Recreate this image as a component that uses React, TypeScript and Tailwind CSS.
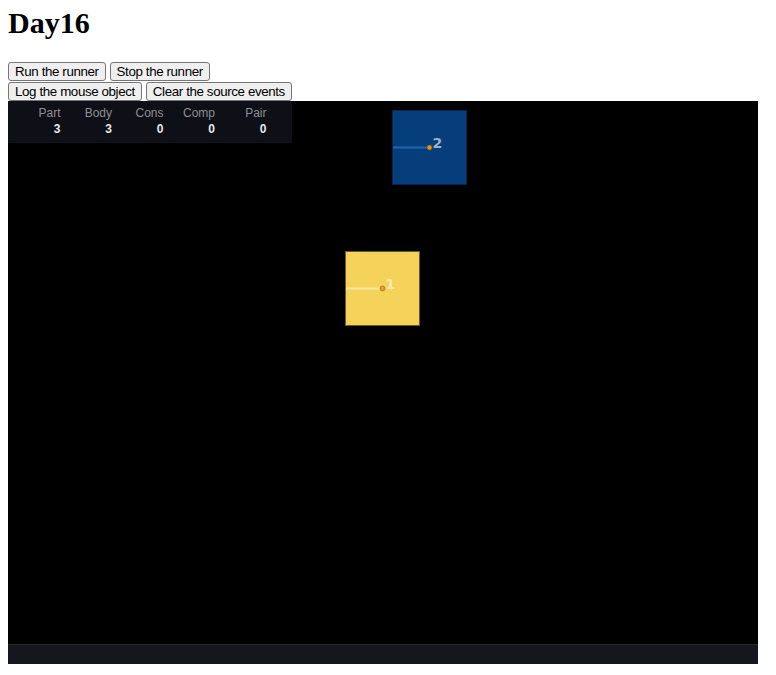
import React from 'react';

const stats = [
  { label: 'Part', value: 3 },
  { label: 'Body', value: 3 },
  { label: 'Cons', value: 0 },
  { label: 'Comp', value: 0 },
  { label: 'Pair', value: 0 },
];

function Btn({ children }: { children: React.ReactNode }) {
  return (
    <button className="h-[19px] px-[6px] bg-[#efefef] border border-[#767676] rounded-[3px] text-[13.33px] leading-[15px] tracking-[-0.38px] text-black font-['Liberation_Sans',Arial,sans-serif]">
      {children}
    </button>
  );
}

function Scene() {
  return (
    <svg width="750" height="543" className="block">
      {/* body 2 */}
      <rect x="384.5" y="9.5" width="74" height="74" fill="#063e7b" stroke="#04264a" strokeWidth="1" />
      <line x1="385" y1="46.5" x2="421.5" y2="46.5" stroke="#1f62b4" strokeWidth="2" />
      <circle cx="421.5" cy="46.5" r="2.5" fill="#e09a1c" stroke="#7a5410" strokeWidth="0.8" />
      <text x="424.5" y="46.5" fill="#9fb0c8" fontSize="14" fontWeight="bold" fontFamily="'DejaVu Sans', sans-serif">2</text>
      {/* body 1 */}
      <rect x="337.5" y="150.5" width="74" height="74" fill="#f5d35b" stroke="#6b5a24" strokeWidth="1" />
      <line x1="338" y1="187.5" x2="374.5" y2="187.5" stroke="#f9e7a2" strokeWidth="2" />
      <circle cx="374.5" cy="187.5" r="2.5" fill="#e0a12c" stroke="#a8781c" strokeWidth="0.8" />
      <text x="377.5" y="187.5" fill="#fbeab0" fontSize="14" fontWeight="bold" fontFamily="'DejaVu Sans', sans-serif">1</text>
    </svg>
  );
}

export default function App() {
  return (
    <div className="min-h-screen bg-white px-[8px] font-['Liberation_Serif','Times_New_Roman',serif]">
      <h1 className="m-0 pt-[5px] text-[30px] leading-[36px] font-bold text-black">Day16</h1>

      <div className="mt-[21px] flex flex-col">
        <div className="flex h-[20px] gap-[4px]">
          <Btn>Run the runner</Btn>
          <Btn>Stop the runner</Btn>
        </div>
        <div className="flex h-[19px] gap-[4px]">
          <Btn>Log the mouse object</Btn>
          <Btn>Clear the source events</Btn>
        </div>
      </div>

      <div className="w-[750px] bg-black">
        <div className="relative h-[543px]">
          <Scene />
          <div className="absolute left-0 top-0 w-[284px] h-[42px] bg-[#0f0f17] flex pt-[5px] pl-[1px] font-['Liberation_Sans',Arial,sans-serif]">
            {stats.map((s) => (
              <div key={s.label} className="w-[51.5px] flex flex-col items-end text-[12px] leading-[15px]">
                <span className="text-[#8e8e96]">{s.label}</span>
                <span className="mt-[1px] font-bold text-[#e8e8ec]">{s.value}</span>
              </div>
            ))}
          </div>
        </div>
        <div className="h-[20px] bg-[#16161f] border-t border-[#2a2a2e]" />
      </div>
    </div>
  );
}
